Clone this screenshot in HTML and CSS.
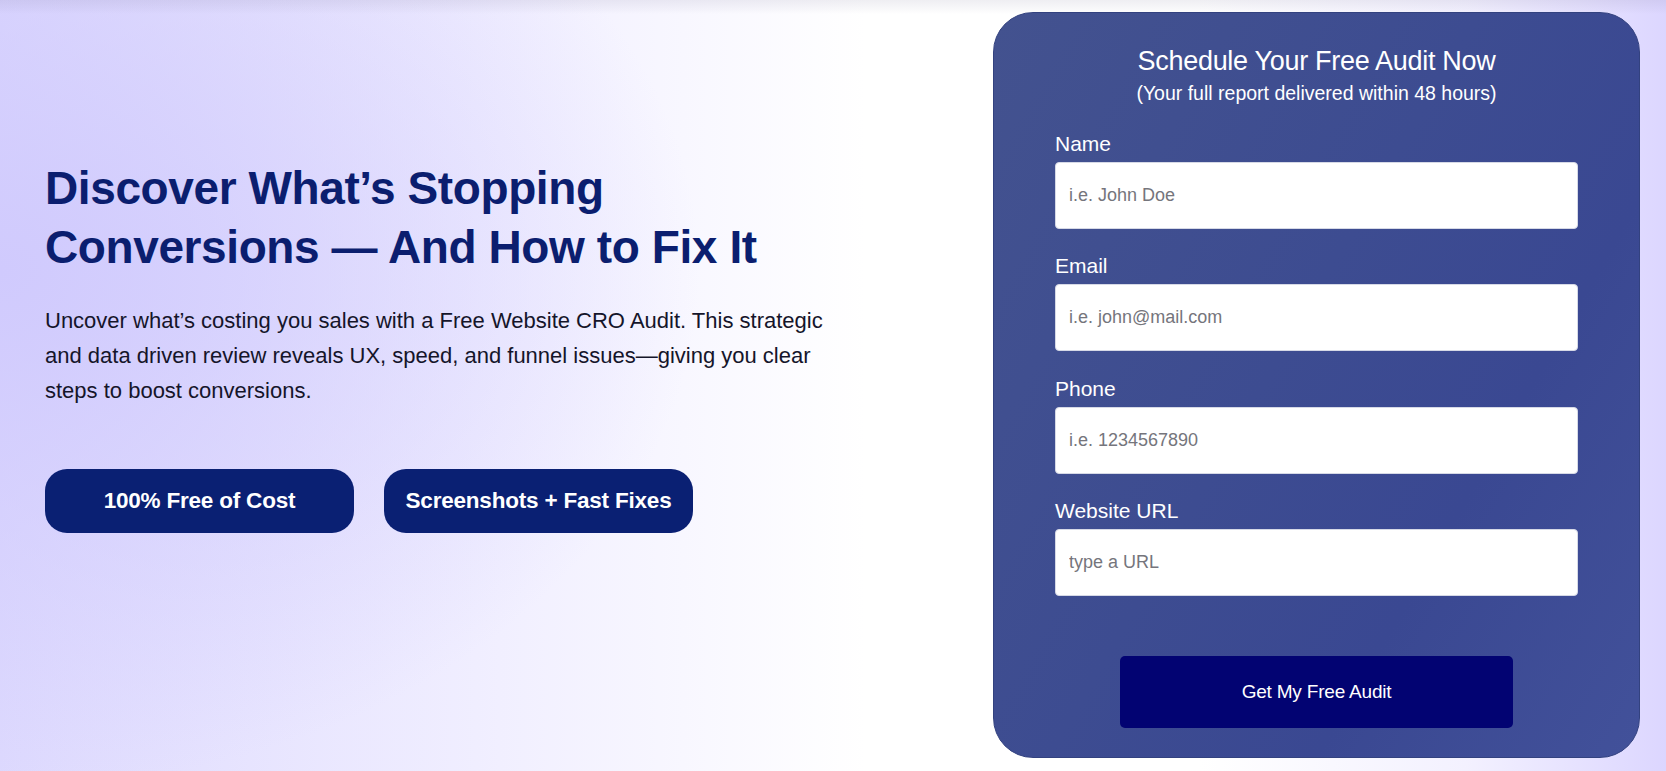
FILE: index.html
```html
<!DOCTYPE html>
<html lang="en">
<head>
<meta charset="utf-8">
<title>Free Website CRO Audit</title>
<link rel="stylesheet" href="styles.css">
</head>
<body>
<section class="hero">
  <div class="intro">
    <h1 class="title">Discover What’s Stopping Conversions — And How to Fix It</h1>
    <p class="lead">Uncover what’s costing you sales with a Free Website CRO Audit. This strategic and data driven review reveals UX, speed, and funnel issues—giving you clear steps to boost conversions.</p>
    <div class="pills">
      <a class="pill" href="#">100% Free of Cost</a>
      <a class="pill" href="#">Screenshots + Fast Fixes</a>
    </div>
  </div>
  <form class="card">
    <h2 class="card-title">Schedule Your Free Audit Now</h2>
    <p class="card-sub">(Your full report delivered within 48 hours)</p>
    <div class="fields">
      <label class="field">
        <span class="label">Name</span>
        <input class="input" type="text" placeholder="i.e. John Doe">
      </label>
      <label class="field">
        <span class="label">Email</span>
        <input class="input" type="email" placeholder="i.e. john@mail.com">
      </label>
      <label class="field">
        <span class="label">Phone</span>
        <input class="input" type="tel" placeholder="i.e. 1234567890">
      </label>
      <label class="field">
        <span class="label">Website URL</span>
        <input class="input" type="text" placeholder="type a URL">
      </label>
    </div>
    <button class="submit" type="button">Get My Free Audit</button>
  </form>
</section>
</body>
</html>
```
FILE: styles.css
```css
* { box-sizing: border-box; }
html, body { margin: 0; padding: 0; }
body {
  font-family: "Liberation Sans", Arial, sans-serif;
  width: 1666px;
  height: 771px;
  overflow: hidden;
}
.hero {
  position: relative;
  display: flex;
  align-items: flex-start;
  height: 771px;
  padding: 12px 26px 13px 45px;
  background:
    linear-gradient(to bottom, rgba(120,115,150,0.12) 0px, rgba(120,115,150,0.04) 10px, rgba(0,0,0,0) 14px),
    radial-gradient(ellipse 700px 520px at 0% 35%, rgba(208,202,253,1) 0%, rgba(208,202,253,0.55) 45%, rgba(208,202,253,0) 100%),
    linear-gradient(to right, #ddd9fe 0%, #f1efff 30%, #ffffff 52%, #ffffff 72%, #f3f1ff 88%, #dcd6ff 100%);
}
.intro {
  flex: 1;
  padding-top: 146.6px;
}
.title {
  margin: 0;
  width: 800px;
  font-size: 46px;
  line-height: 59px;
  font-weight: 700;
  letter-spacing: -0.4px;
  color: #0b1e6f;
}
.lead {
  margin: 26.4px 0 0;
  width: 790px;
  font-size: 22px;
  line-height: 35px;
  color: #15152a;
  letter-spacing: 0;
}
.pills {
  display: flex;
  gap: 30px;
  margin-top: 61px;
}
.pill {
  display: flex;
  align-items: center;
  justify-content: center;
  width: 309px;
  height: 64px;
  border-radius: 22px;
  background: #0a2073;
  color: #ffffff;
  font-weight: 700;
  font-size: 22.5px;
  letter-spacing: -0.2px;
  text-decoration: none;
}
.card {
  width: 647px;
  height: 746px;
  margin: 0;
  padding: 31.5px 61px 0;
  border: 1px solid #33427f;
  border-radius: 40px;
  background: linear-gradient(120deg, #43528f 0%, #3d4c91 45%, #3a4892 70%, #42519a 100%);
  display: flex;
  flex-direction: column;
  align-items: stretch;
}
.card-title {
  margin: 0;
  text-align: center;
  font-size: 27px;
  line-height: 32px;
  font-weight: 400;
  letter-spacing: -0.3px;
  color: #ffffff;
}
.card-sub {
  margin: 4.8px 0 0;
  text-align: center;
  font-size: 19.5px;
  line-height: 24px;
  color: #ffffff;
}
.fields {
  display: flex;
  flex-direction: column;
  gap: 25.5px;
  margin-top: 26.4px;
}
.field {
  display: flex;
  flex-direction: column;
  gap: 6px;
}
.label {
  font-size: 21px;
  line-height: 24px;
  color: #ffffff;
}
.input {
  display: block;
  width: 100%;
  height: 67px;
  margin: 0;
  padding: 0 13px;
  border: 1px solid #d6d9e6;
  border-radius: 4px;
  background: #ffffff;
  font-family: "Liberation Sans", Arial, sans-serif;
  font-size: 18px;
  color: #333;
  outline: none;
}
.input::placeholder { color: #75757c; }
.submit {
  align-self: center;
  width: 393px;
  height: 72px;
  margin-top: 60px;
  border: 0;
  border-radius: 5px;
  background: #020372;
  color: #ffffff;
  font-family: "Liberation Sans", Arial, sans-serif;
  font-size: 19px;
  letter-spacing: -0.2px;
  cursor: pointer;
}
```
